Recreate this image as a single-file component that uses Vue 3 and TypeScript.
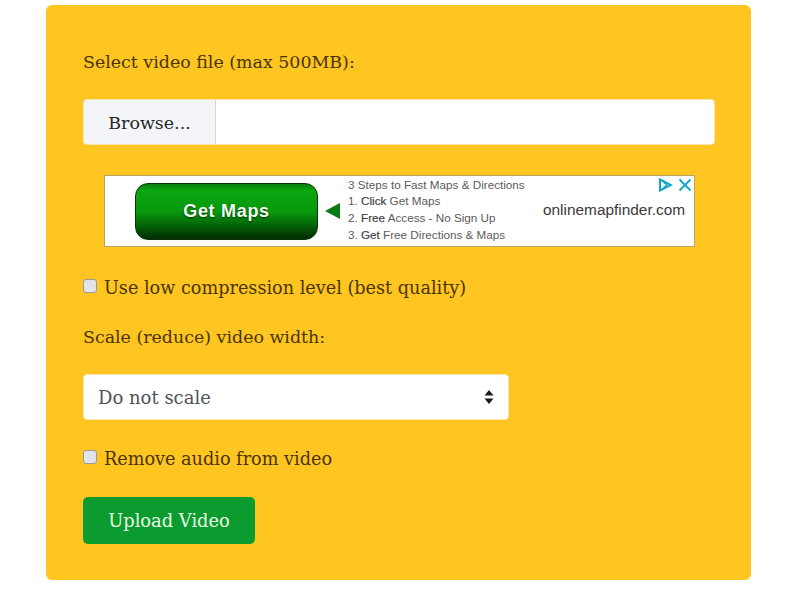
<script setup lang="ts">
const steps: { num?: string; bold?: string; text: string }[] = [
  { text: '3 Steps to Fast Maps & Directions' },
  { num: '1. ', bold: 'Click', text: ' Get Maps' },
  { num: '2. ', bold: 'Free', text: ' Access - No Sign Up' },
  { num: '3. ', bold: 'Get', text: ' Free Directions & Maps' }
]
</script>

<template>
  <div class="page">
    <form class="card" @submit.prevent>
      <label class="label first">Select video file (max 500MB):</label>
      <div class="file">
        <span class="browse">Browse...</span>
        <span class="file-name"></span>
      </div>

      <div class="ad">
        <div class="ad-btn">Get Maps</div>
        <svg class="ad-arrow" width="15" height="16" viewBox="0 0 15 16"><path d="M0 8 15 0v16z" fill="#0a7a12" /></svg>
        <ul class="ad-list">
          <li v-for="s in steps" :key="s.text">{{ s.num }}<b v-if="s.bold">{{ s.bold }}</b>{{ s.text }}</li>
        </ul>
        <div class="ad-domain">onlinemapfinder.com</div>
        <div class="ad-icons">
          <svg width="15" height="14" viewBox="0 0 15 14" fill="none" stroke="#12a5c9" stroke-width="2"><path d="M2 1.500 13 7 2 12.500z" /><path d="M5.500 4.500 9 7l-3.500 2.500" stroke-width="1.200" /></svg>
          <svg width="14" height="14" viewBox="0 0 14 14" fill="none" stroke="#12a5c9" stroke-width="1.800"><path d="M1.500 1.500l11 11M12.500 1.500l-11 11" /></svg>
        </div>
      </div>

      <label class="check first-check"><input type="checkbox" />Use low compression level (best quality)</label>
      <label class="label scale">Scale (reduce) video width:</label>
      <div class="select-wrap">
        <select class="select"><option>Do not scale</option></select>
        <svg class="carets" width="10" height="14" viewBox="0 0 10 14"><path d="M5 0 9.500 5.500H.5zM5 14 .5 8.500h9z" fill="#1a1a1a" /></svg>
      </div>
      <label class="check second-check"><input type="checkbox" />Remove audio from video</label>
      <button class="upload" type="submit">Upload Video</button>
    </form>
  </div>
</template>

<style scoped>
.page {
  padding: 5px 49px 10px 46px;
  font-family: "DejaVu Serif", "Liberation Serif", serif;
}
.card {
  background: #ffc520;
  border-radius: 6px;
  height: 575px;
  box-sizing: border-box;
  padding: 45px 36px 0 37px;
  display: flex;
  flex-direction: column;
  align-items: flex-start;
  color: #4a3403;
}
.label {
  font-size: 17.420px;
  line-height: 24px;
  display: block;
}
.file {
  margin-top: 25px;
  width: 100%;
  height: 46px;
  display: flex;
  background: #fff;
  border-radius: 4px;
  border: 1px solid #f6e3ad;
  box-sizing: border-box;
  overflow: hidden;
}
.browse {
  width: 131px;
  background: #f4f5f8;
  border-right: 1px solid #d8d8d8;
  color: #25262b;
  font-size: 17.450px;
  line-height: 46px;
  text-align: center;
}
.file-name { flex: 1; }
.ad {
  position: relative;
  margin: 30px 0 0 21px;
  width: 591px;
  height: 72px;
  box-sizing: border-box;
  background: #fff;
  border: 1px solid #b9a468;
  display: flex;
  align-items: center;
  font-family: "Liberation Sans", Arial, sans-serif;
}
.ad-btn {
  margin-left: 30px;
  width: 183px;
  height: 57px;
  border-radius: 13px;
  border: 1px solid #06330a;
  box-sizing: border-box;
  background: linear-gradient(#0a7d0e 0%, #0ba510 12%, #089a0c 50%, #056a08 72%, #012c03 100%);
  color: #f2fff2;
  font-weight: 700;
  font-size: 18px;
  letter-spacing: 0.7px;
  text-align: center;
  line-height: 55px;
  text-shadow: 0 1px 2px #03300a;
}
.ad-arrow { margin-left: 7px; }
.ad-list {
  list-style: none;
  margin: 0 0 2px 8px;
  padding: 0;
  width: 195px;
  font-size: 11.700px;
  line-height: 16.600px;
  color: #5b5b5b;
  white-space: nowrap;
}
.ad-list b { color: #444; font-weight: 400; -webkit-text-stroke: 0.2px #444; }
.ad-domain {
  font-size: 15.400px;
  color: #3a3a3a;
  margin-bottom: 2px;
}
.ad-icons {
  position: absolute;
  top: 2px;
  right: 2px;
  display: flex;
  gap: 5px;
}
.check {
  display: flex;
  align-items: center;
  font-size: 17.650px;
  line-height: 24px;
}
.check input {
  appearance: none;
  width: 14px;
  height: 14px;
  margin: 0 7px 4px 0;
  background: #e3e4ea;
  border: 1px solid #9a9a96;
  border-radius: 3px;
  box-sizing: border-box;
}
.first-check { margin-top: 29px; }
.scale { margin-top: 25px; }
.select-wrap {
  position: relative;
  margin-top: 25px;
  width: 426px;
}
.select {
  appearance: none;
  display: block;
  width: 100%;
  height: 46px;
  border: 1px solid #f6e3ad;
  border-radius: 4px;
  background: #fff;
  padding: 0 14px;
  font: inherit;
  font-size: 18px;
  color: #50535a;
}
.carets {
  position: absolute;
  right: 15px;
  top: 16px;
}
.second-check { margin-top: 27px; }
.upload {
  margin-top: 26px;
  width: 172px;
  height: 47px;
  background: #0b9b2e;
  border: none;
  border-radius: 5px;
  color: #e9fbe6;
  font: inherit;
  font-size: 17.850px;
  padding: 0;
}
</style>
